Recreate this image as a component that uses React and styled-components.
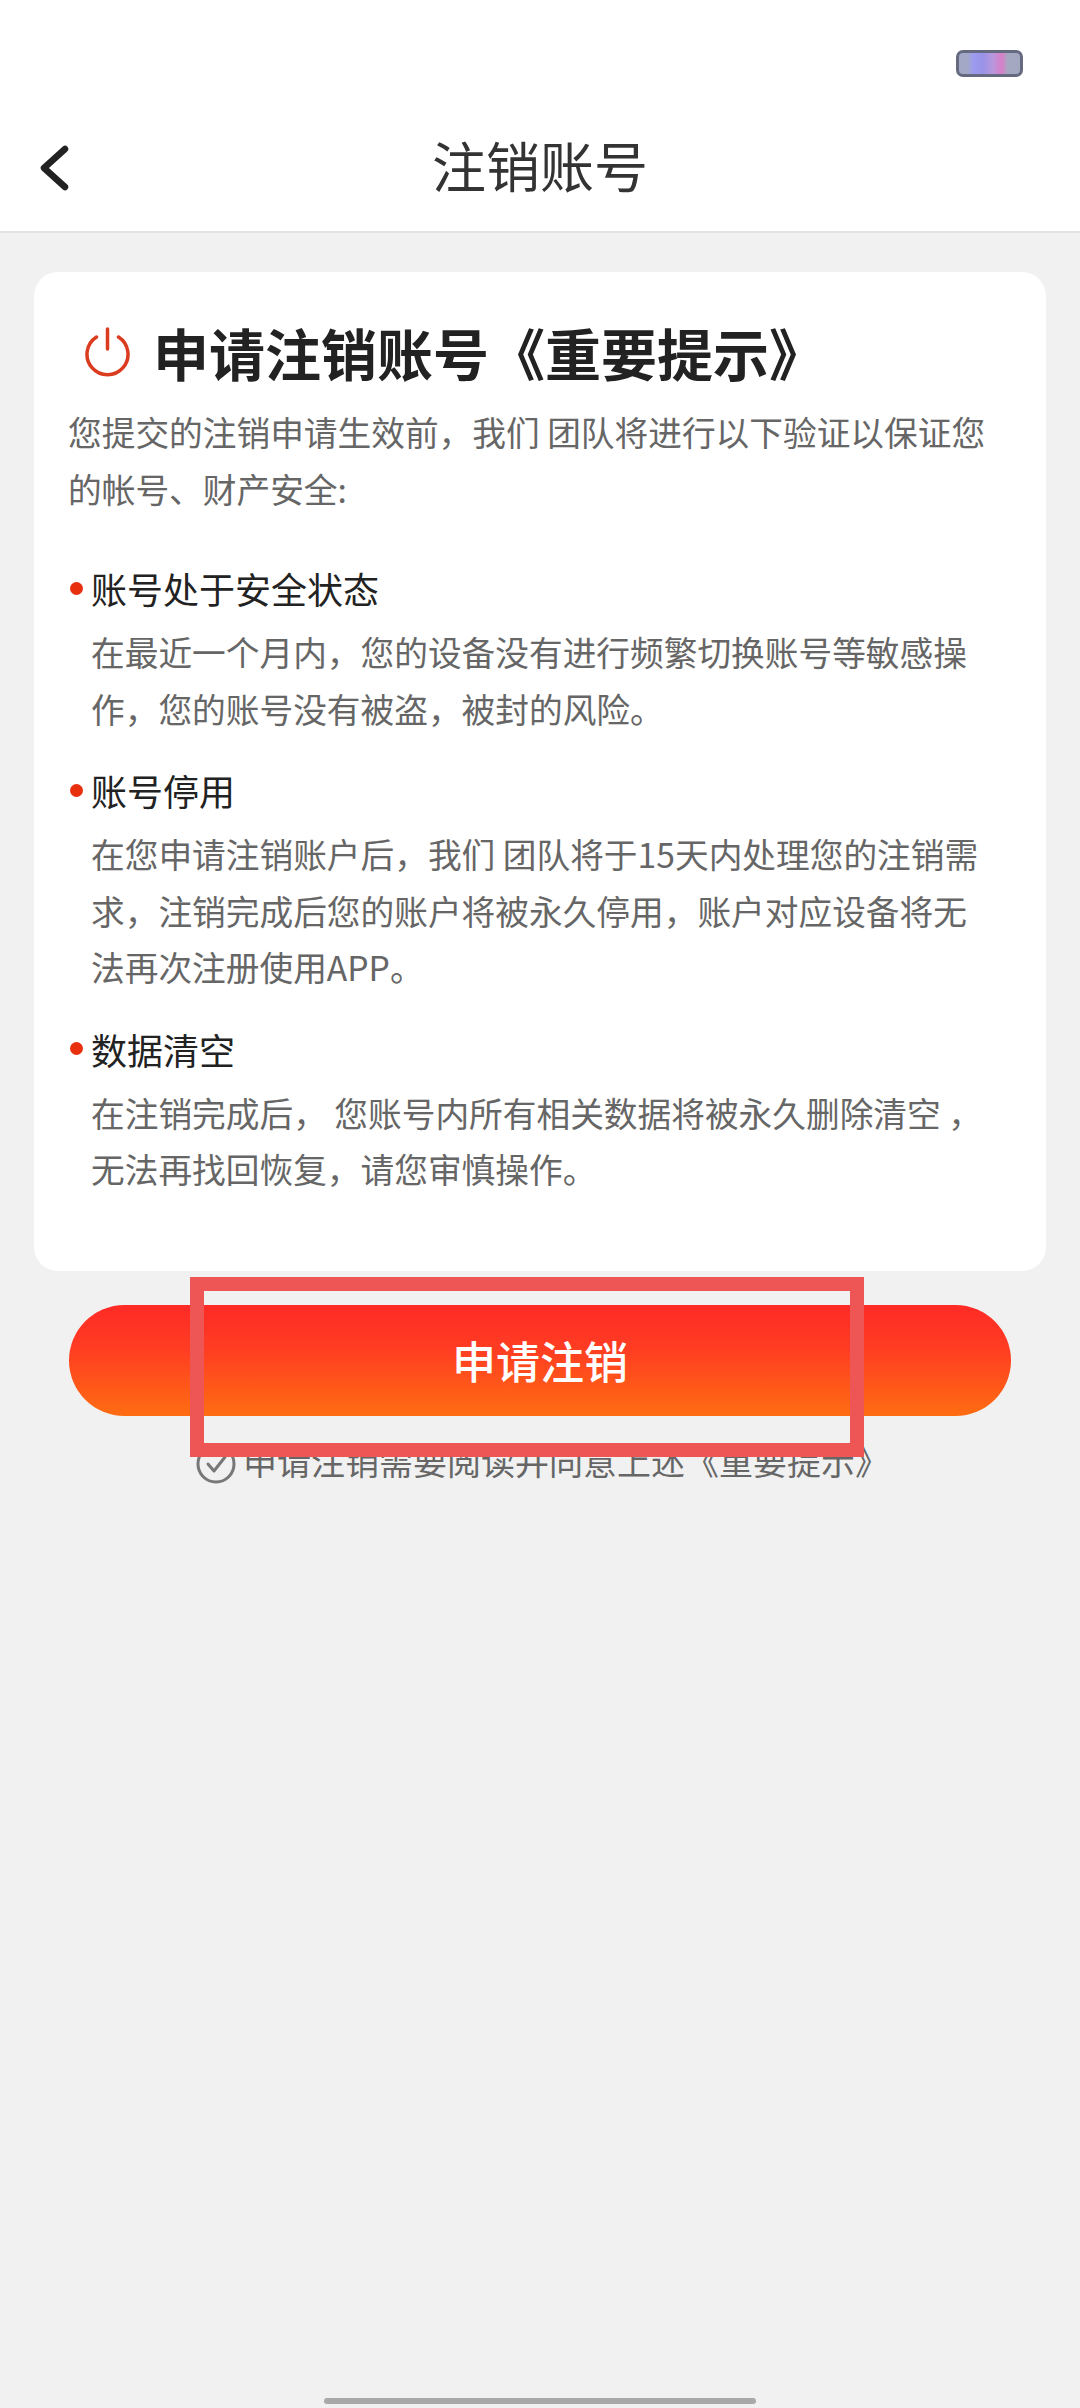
import React from 'react';
import styled, { createGlobalStyle } from 'styled-components';

const FONT = '"Noto Sans CJK SC", "Noto Sans", sans-serif';

const Global = createGlobalStyle`
  html, body { margin: 0; padding: 0; background: #f1f1f1; }
  * { box-sizing: border-box; }
`;

const Page = styled.div`
  position: relative;
  width: 1080px;
  height: 2408px;
  overflow: hidden;
  background: #f1f1f1;
  font-family: ${FONT};
  display: flex;
  flex-direction: column;
`;

const Top = styled.header`
  height: 233px;
  background: #fff;
  border-bottom: 2px solid #e2e2e2;
  display: flex;
  flex-direction: column;
`;

const StatusBar = styled.div`
  height: 104px;
  padding: 50px 57px 0 0;
  display: flex;
  justify-content: flex-end;
`;

const Battery = styled.div`
  width: 67px;
  height: 27px;
  border-radius: 7px;
  border: 3px solid #666a80;
  filter: blur(0.6px);
  background: linear-gradient(90deg, #a2a8c6 0%, #a2a8c6 14%, #9b9bf0 24%, #9a92e6 40%, #b798dc 55%, #d880c8 70%, #a5a8c2 80%, #a2a8c0 100%);
`;

const NavBar = styled.div`
  flex: 1;
  position: relative;
  display: flex;
  align-items: center;
  justify-content: center;
  padding-bottom: 5px;
`;

const Back = styled.svg`
  position: absolute;
  left: 38px;
  top: 40px;
  width: 34px;
  height: 48px;
`;

const NavTitle = styled.h1`
  margin: 0;
  font-size: 54px;
  font-weight: 400;
  line-height: 70px;
  color: #333;
`;

const Card = styled.section`
  margin: 39px 34px 0;
  height: 999px;
  background: #fff;
  border-radius: 24px;
  padding: 40px 34px 0;
`;

const Heading = styled.div`
  display: flex;
  align-items: center;
  gap: 23px;
  height: 80px;
  padding-left: 17px;
  margin-bottom: 12px;
`;

const Power = styled.svg`
  width: 45px;
  height: 50px;
  flex: none;
`;

const HeadingText = styled.h2`
  margin: 0;
  font-size: 56px;
  font-weight: 700;
  line-height: 80px;
  color: #222;
  white-space: nowrap;
`;

const Para = styled.p`
  margin: 0 0 0 ${p => p.$indent || 0}px;
  font-size: 33.7px;
  line-height: 56.5px;
  font-weight: 400;
  color: #666;
  white-space: pre;
`;

const Section = styled.div`
  margin-top: ${p => p.$top}px;
`;

const ItemTitle = styled.h3`
  margin: 0 0 12px;
  display: flex;
  align-items: center;
  height: 48px;
  gap: 8px;
  font-size: 36px;
  font-weight: 400;
  line-height: 48px;
  color: #222;
`;

const Dot = styled.span`
  width: 13px;
  height: 13px;
  margin-left: 2px;
  border-radius: 50%;
  background: #e8300f;
  flex: none;
`;

const Action = styled.button`
  display: block;
  margin: 34px auto 0;
  width: 942px;
  height: 111px;
  border: 0;
  border-radius: 56px;
  background: linear-gradient(180deg, #ff2a26 0%, #ff3d22 40%, #fe6d12 100%);
  color: #fff;
  font-family: ${FONT};
  font-size: 44px;
  font-weight: 500;
  line-height: 111px;
  padding: 0;
`;

const Agree = styled.div`
  margin-top: 26px;
  display: flex;
  align-items: center;
  justify-content: center;
  gap: 7px;
  padding-left: 5px;
  height: 44px;
  font-size: 34px;
  color: #666;
`;

const AgreeText = styled.span`
  position: relative;
  top: -4px;
`;

const Tick = styled.svg`
  width: 40px;
  height: 40px;
  flex: none;
`;

const Marker = styled.div`
  position: absolute;
  left: 190px;
  top: 1277px;
  width: 674px;
  height: 180px;
  border: 14px solid #ee5555;
`;

const HomeBar = styled.div`
  position: absolute;
  left: 324px;
  top: 2398px;
  width: 432px;
  height: 6px;
  border-radius: 3px;
  background: #a8a8a8;
`;

const sections = [
  {
    top: 47,
    title: '账号处于安全状态',
    lines: ['在最近一个月内，您的设备没有进行频繁切换账号等敏感操', '作，您的账号没有被盗，被封的风险。'],
  },
  {
    top: 29,
    title: '账号停用',
    lines: ['在您申请注销账户后，我们 团队将于15天内处理您的注销需', '求，注销完成后您的账户将被永久停用，账户对应设备将无', '法再次注册使用APP。'],
  },
  {
    top: 29,
    title: '数据清空',
    lines: ['在注销完成后， 您账号内所有相关数据将被永久删除清空 ，', '无法再找回恢复，请您审慎操作。'],
  },
];

export default function App() {
  return (
    <Page>
      <Global />
      <Top>
        <StatusBar>
          <Battery />
        </StatusBar>
        <NavBar>
          <Back viewBox="0 0 34 48" fill="none">
            <path d="M27 5 L6 24 L27 43" stroke="#222" strokeWidth="6.5" strokeLinecap="round" strokeLinejoin="round" />
          </Back>
          <NavTitle>注销账号</NavTitle>
        </NavBar>
      </Top>
      <Card>
        <Heading>
          <Power viewBox="0 0 45 50" fill="none">
            <path d="M11.5 10 A20.5 20.5 0 1 0 33.5 10" stroke="#db3b1f" strokeWidth="3.5" strokeLinecap="round" />
            <path d="M22.5 2 V22" stroke="#db3b1f" strokeWidth="3.5" strokeLinecap="round" />
          </Power>
          <HeadingText>申请注销账号《重要提示》</HeadingText>
        </Heading>
        <Para>您提交的注销申请生效前，我们 团队将进行以下验证以保证您</Para>
        <Para>的帐号、财产安全:</Para>
        {sections.map(s => (
          <Section key={s.title} $top={s.top}>
            <ItemTitle>
              <Dot />
              {s.title}
            </ItemTitle>
            {s.lines.map(l => (
              <Para key={l} $indent={23}>{l}</Para>
            ))}
          </Section>
        ))}
      </Card>
      <Action>申请注销</Action>
      <Agree>
        <Tick viewBox="0 0 40 40" fill="none">
          <circle cx="20" cy="20" r="18" stroke="#777" strokeWidth="3" />
          <path d="M12 20 L18 27 L29 13" stroke="#777" strokeWidth="3" strokeLinecap="round" strokeLinejoin="round" />
        </Tick>
        <AgreeText>申请注销需要阅读并同意上述《重要提示》</AgreeText>
      </Agree>
      <Marker />
      <HomeBar />
    </Page>
  );
}
